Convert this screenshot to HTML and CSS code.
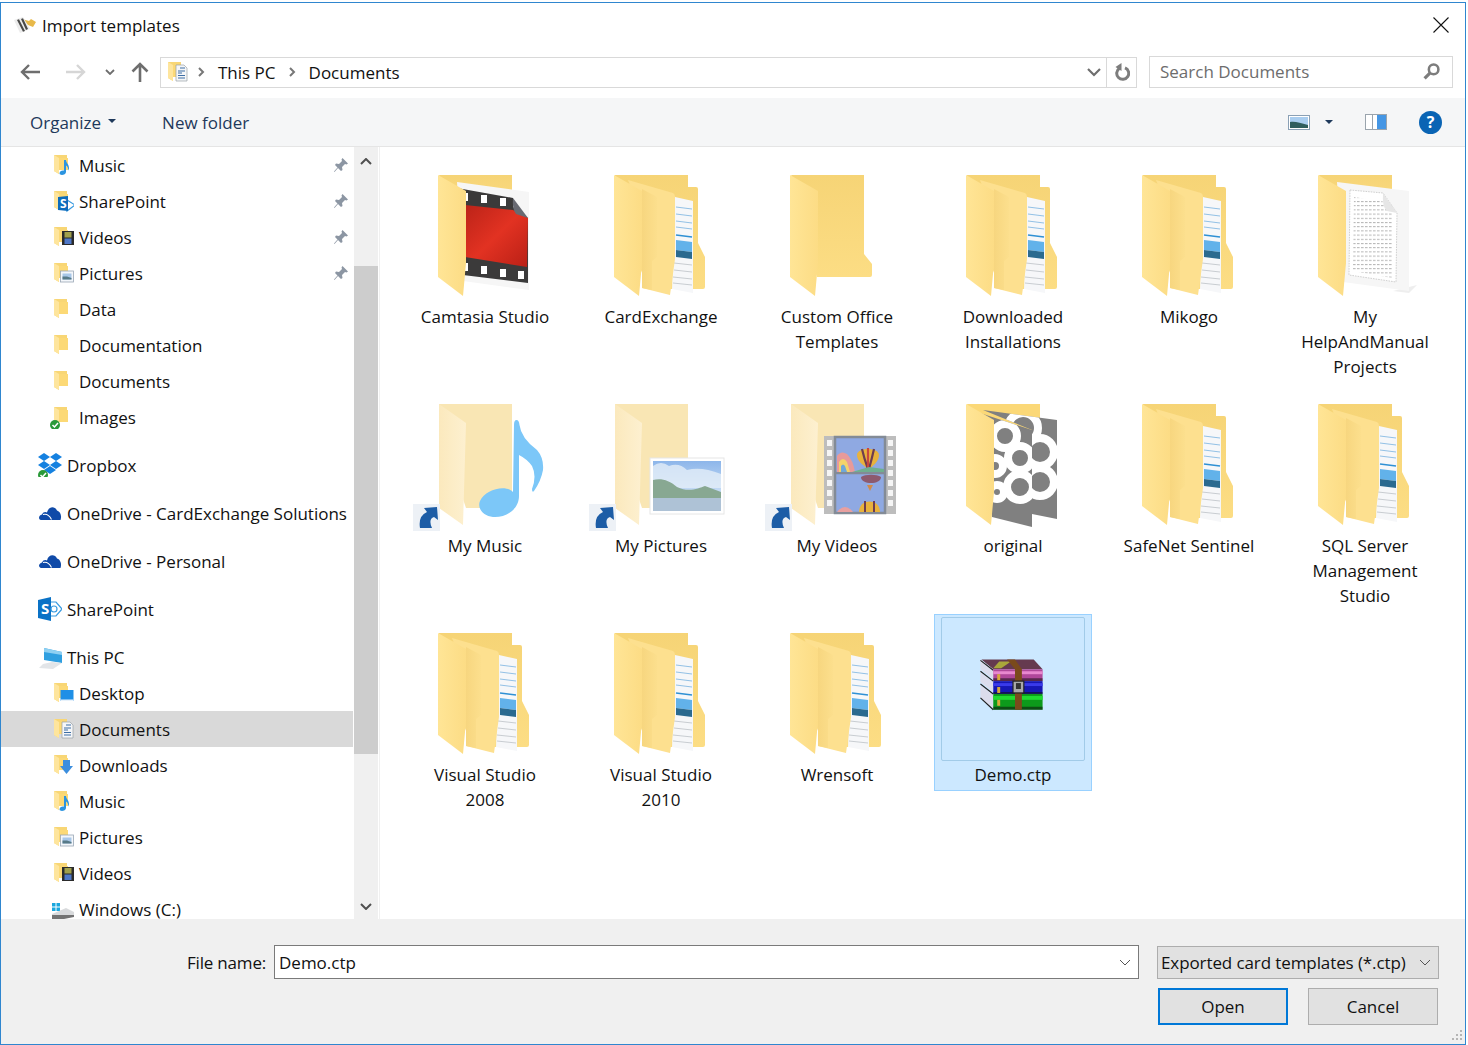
FILE: index.html
```html
<!DOCTYPE html>
<html lang="en">
<head>
<meta charset="utf-8">
<title>Import templates</title>
<link rel="stylesheet" href="styles.css">
</head>
<body>
<svg class="defs" xmlns="http://www.w3.org/2000/svg">
  <defs>
    <linearGradient id="gBack" x1="0" y1="0" x2="0" y2="1"><stop offset="0" stop-color="#f6d476"/><stop offset="1" stop-color="#fcdd84"/></linearGradient>
    <linearGradient id="gFlap" x1="0" y1="0" x2="1" y2="0"><stop offset="0" stop-color="#ffe596"/><stop offset="1" stop-color="#fcdc85"/></linearGradient>
    <linearGradient id="gStrip" x1="0" y1="0" x2="1" y2="0"><stop offset="0" stop-color="#f7d67f"/><stop offset="1" stop-color="#fcdf8d"/></linearGradient>
    <linearGradient id="gRed" x1="0" y1="0" x2="1" y2="1"><stop offset="0" stop-color="#bb2318"/><stop offset=".5" stop-color="#e23222"/><stop offset="1" stop-color="#b92016"/></linearGradient>
    <linearGradient id="gSky" x1="0" y1="0" x2="0" y2="1"><stop offset="0" stop-color="#8db6ea"/><stop offset="1" stop-color="#e9f3fb"/></linearGradient>
    <linearGradient id="gFade" x1="0" y1="0" x2="1" y2="0"><stop offset="0" stop-color="#fbe9bd"/><stop offset="1" stop-color="#fdf0d0"/></linearGradient>
    <pattern id="pLines" width="4" height="4.2" patternUnits="userSpaceOnUse"><rect width="2.6" height="1" fill="#b4b4b4"/></pattern>
    <clipPath id="cFront"><path d="M39 25 91 42V139L51 129Z"/></clipPath>
    <clipPath id="cRear"><path d="M42 22 116 32V131L91 126V42Z"/></clipPath>

    <symbol id="flap" viewBox="0 0 144 144"><path d="M25 16 53 32V104L50 137 25 118Z" fill="url(#gFlap)"/></symbol>

    <symbol id="lg-plain" viewBox="0 0 144 144">
      <path d="M26 16H99V95L107 105V116Q107 118 105 118H52V60Z" fill="url(#gBack)"/>
      <use href="#flap"/>
    </symbol>

    <symbol id="lg-docs" viewBox="0 0 144 144">
      <path d="M26 16H99V28H107Q109 28 109 30V84L116 98V128Q116 130 114 130H60L30 60Z" fill="url(#gBack)"/>
      <path d="M86 38 104 42V134L83 130Z" fill="#f6f7f9"/>
      <path d="M87 48 103 50M87 55 103 57M87 62 103 64M87 68 103 70" stroke="#79b3e0" stroke-width=".8" fill="none"/>
      <path d="M87 76 103 78" stroke="#2f90d4" stroke-width="1.6" fill="none"/>
      <path d="M87 81 103 83V93L87 91Z" fill="#62b2ea"/>
      <path d="M87 91 103 93V100L87 98Z" fill="#2b6a8f"/>
      <path d="M85 104 103 106M85 111 103 113M84 118 103 120M84 124 103 126" stroke="#bcc2c7" stroke-width=".8" fill="none"/>
      <path d="M39 21 84 34Q86 35 86 38V100L81 136 53 129V60Z" fill="#fde08f"/>
      <path d="M53 30 68 38V98L63 102V131L53 129Z" fill="url(#gStrip)"/>
      <use href="#flap"/>
    </symbol>

    <symbol id="lg-camtasia" viewBox="0 0 144 144">
      <path d="M26 16H99V60H40Z" fill="url(#gBack)"/>
      <path d="M44 23 116 33V131L50 122Z" fill="#f6f6f6"/>
      <path d="M44 29 100 39V48L115 59V124L50 116Z" fill="#3b3a3a"/>
      <path d="M52 46 100 51 115 59 114 108 52 98Z" fill="url(#gRed)"/>
      <path d="M100 39 115 59 103 55Q99 50 100 39Z" fill="#686a72"/>
      <g fill="#fff"><rect x="49" y="34" width="6" height="8"/><rect x="68" y="36" width="6" height="8"/><rect x="87" y="39" width="6" height="8"/><rect x="49" y="104" width="6" height="8"/><rect x="68" y="107" width="6" height="8"/><rect x="87" y="110" width="6" height="8"/><rect x="105" y="112" width="6" height="8"/></g>
      <use href="#flap"/>
    </symbol>

    <symbol id="lg-help" viewBox="0 0 144 144">
      <path d="M26 16H99V60H40Z" fill="url(#gBack)"/>
      <path d="M100 132 124 126 116 134Z" fill="#eee"/>
      <path d="M44 23 116 32V132L50 123Z" fill="#f6f6f6"/>
      <path d="M57 31 90 34 104 54 103 123 56 116Z" fill="#fff" stroke="#bdbdbd" stroke-width=".7" stroke-dasharray="1.6 1"/>
      <path d="M61 38 99 44V119L60 112Z" fill="url(#pLines)"/>
      <path d="M90 34 104 54 94 52Q89 48 90 34Z" fill="#e6e6e6"/>
      <use href="#flap"/>
    </symbol>

    <symbol id="lg-original" viewBox="0 0 144 144">
      <path d="M26 16H99V60H40Z" fill="#fbd877"/>
      <path d="M42 22 116 32V131L91 126V42Z" fill="#808080"/>
      <g clip-path="url(#cRear)" fill="none" stroke="#fff" stroke-width="8"><circle cx="82" cy="40" r="15"/><circle cx="99" cy="64" r="14"/><circle cx="99" cy="94" r="14"/></g>
      <path d="M39 25 91 42V139L51 129Z" fill="#808080"/>
      <g clip-path="url(#cFront)" fill="none" stroke="#fff" stroke-width="8"><circle cx="64" cy="48" r="12"/><circle cx="79" cy="70" r="12"/><circle cx="79" cy="99" r="13"/><circle cx="54" cy="78" r="8"/><circle cx="56" cy="104" r="7"/></g>
      <use href="#flap"/>
    </symbol>

    <symbol id="lg-faded" viewBox="0 0 144 144">
      <path d="M26 16H99V120H53L26 40Z" fill="#f9e6b4"/>
      <path d="M26 16 53 35 50 137 26 120Z" fill="url(#gFade)"/>
    </symbol>

    <symbol id="shortcut" viewBox="0 0 144 144">
      <rect x="0" y="116" width="27" height="27" fill="#edf1f6"/>
      <path d="M7 140Q5 128 14 124L11 120 24 119 25 132 21 129Q15 131 19 140Z" fill="#1d5da6"/>
    </symbol>

    <symbol id="lg-music" viewBox="0 0 144 144">
      <use href="#lg-faded"/>
      <path d="M101 37Q101 32 103.5 32 106 32 106.5 37 108 50 124 62 131 70 130 82 128 93 121 103 119 105 119 101 124 88 119 78 114 71 106 67V108C106 122 92 130 80 129 70 128 64 120 67 113 72 102 92 96 100 104Z" fill="#7cc7f8"/>
      <use href="#shortcut"/>
    </symbol>

    <symbol id="lg-pics" viewBox="0 0 144 144">
      <use href="#lg-faded"/>
      <rect x="61" y="70" width="74" height="56" fill="#fff" stroke="#e6e6e6"/>
      <rect x="64" y="73" width="68" height="50" fill="url(#gSky)"/>
      <path d="M64 78Q72 72 80 78 90 74 98 82 112 78 132 86V100H64Z" fill="#e4eef8" opacity=".8"/>
      <path d="M64 92C72 90 80 92 88 99 100 105 110 100 116 98L132 104V110H64Z" fill="#88a892"/>
      <rect x="64" y="110" width="68" height="13" fill="#aec2d6"/>
      <use href="#shortcut"/>
    </symbol>

    <symbol id="lg-videos" viewBox="0 0 144 144">
      <use href="#lg-faded"/>
      <rect x="59" y="48" width="72" height="78" fill="#bdbdbd"/>
      <rect x="70" y="49" width="50" height="76" fill="#8fa9e2" stroke="#838b96" stroke-width="2.5"/>
      <path d="M70 85H120" stroke="#838b96" stroke-width="2.5"/>
      <g fill="#fff" opacity=".85"><rect x="62" y="52" width="5" height="6"/><rect x="62" y="62" width="5" height="6"/><rect x="62" y="72" width="5" height="6"/><rect x="62" y="82" width="5" height="6"/><rect x="62" y="92" width="5" height="6"/><rect x="62" y="102" width="5" height="6"/><rect x="62" y="112" width="5" height="6"/><rect x="123" y="52" width="5" height="6"/><rect x="123" y="62" width="5" height="6"/><rect x="123" y="72" width="5" height="6"/><rect x="123" y="82" width="5" height="6"/><rect x="123" y="92" width="5" height="6"/><rect x="123" y="102" width="5" height="6"/><rect x="123" y="112" width="5" height="6"/></g>
      <path d="M72 84V68Q76 62 82 66 88 72 90 84Z" fill="#e89a9a"/>
      <path d="M74 84V74Q78 68 82 74L85 84Z" fill="#f3d36a"/>
      <path d="M76 84V78Q78 75 80 78L82 84Z" fill="#6fa8d8"/>
      <path d="M92 67C92 59 114 59 114 67 114 74 107 78 104 82 100 78 92 74 92 67Z" fill="#e8b23c"/>
      <path d="M97 61Q99 70 103 81M109 61Q107 70 104 81" stroke="#6e3d50" stroke-width="2.2" fill="none"/>
      <path d="M103 60V81" stroke="#c9483f" stroke-width="2.2"/>
      <path d="M87 84H119V81L104 79Z" fill="#6faf8f"/>
      <path d="M96 89C96 97 116 97 116 89 112 86 100 86 96 89Z" fill="#8d5a6e"/>
      <path d="M102 97 108 97 105 103Z" fill="#d08a4a"/>
      <path d="M94 124C94 110 115 110 115 124Z" fill="#e8b23c"/>
      <path d="M100 113V124M109 113V124" stroke="#6e3d50" stroke-width="2"/>
      <path d="M72 124Q80 114 88 124Z" fill="#e8a0a0"/>
      <use href="#shortcut"/>
    </symbol>

    <symbol id="lg-rar" viewBox="0 0 144 144">
      <path d="M40 42H93L102 52H52Z" fill="#653a4f"/>
      <path d="M58 44 70 44 60 51 52 51Z" fill="#a9a73a"/>
      <path d="M39 42 52 52V62L39 52Z" fill="#dcdcec"/>
      <path d="M39 55 52 65V75L39 65Z" fill="#dcdcec"/>
      <path d="M39 68 52 78V92L39 81Z" fill="#dcdcec"/>
      <path d="M39 43 52 53M39 54 52 64M39 67 52 77M39 81 52 93" stroke="#222" stroke-width="1.2"/>
      <rect x="52" y="52" width="50" height="12" fill="#b0479a"/>
      <rect x="52" y="54" width="50" height="3" fill="#e888cf"/>
      <rect x="52" y="64" width="50" height="13" fill="#1717b5"/>
      <rect x="52" y="66" width="50" height="3" fill="#3a3aea"/>
      <rect x="52" y="77" width="50" height="16" fill="#0d9a1b"/>
      <rect x="52" y="79" width="50" height="4" fill="#1fdc30"/>
      <path d="M52 90H102V93H52ZM52 61H102V64H52ZM52 75H102V77H52Z" fill="#111" opacity=".55"/>
      <rect x="56" y="57" width="3" height="6" fill="#d8a93a"/><rect x="56" y="70" width="3" height="6" fill="#d8a93a"/><rect x="56" y="83" width="3" height="6" fill="#d8a93a"/>
      <path d="M66 42H74L81 52V93H74V52Z" fill="#7a4a1c"/>
      <rect x="72" y="64" width="11" height="12" fill="#a9a9a9" stroke="#222" stroke-width="1.2"/>
      <rect x="75" y="66" width="5" height="6" fill="#333"/>
    </symbol>

    <!-- small nav icons -->
    <symbol id="s-folder" viewBox="0 0 24 24">
      <path d="M4 2H17V17H9V21L4 18Z" fill="#f8d675"/>
      <path d="M9 5H18V17H9Z" fill="#fcd976"/>
      <path d="M4 2 9 5V21L4 18Z" fill="#fee59d"/>
    </symbol>
    <symbol id="s-music" viewBox="0 0 24 24"><use href="#s-folder"/><path d="M14 7H16C16 10 19 11 19 15 19 16 18.500 17 18 17.500 18.500 14 17 13 16 12.500V19C16 22 10 23 9.500 20.500 9.500 18 12 17 14 17.500Z" fill="#2b94e0"/></symbol>
    <symbol id="s-videos" viewBox="0 0 24 24"><use href="#s-folder"/><rect x="12" y="6" width="12" height="14" fill="#2b2b2b"/><rect x="14.500" y="7" width="7" height="5.500" fill="#a1a04b"/><rect x="14.500" y="13.500" width="7" height="5.500" fill="#4f78c8"/></symbol>
    <symbol id="s-pics" viewBox="0 0 24 24"><use href="#s-folder"/><rect x="10.500" y="10" width="13" height="11" fill="#f4f7fb" stroke="#9aa6b5" stroke-width=".8"/><rect x="12.500" y="12.500" width="9" height="6" fill="#a8c7e8"/><path d="M12.500 15.500 17 15.500 21.500 17V18.500H12.500Z" fill="#577a88"/></symbol>
    <symbol id="s-docs" viewBox="0 0 24 24"><use href="#s-folder"/><path d="M12 5H20L23 8V21H12Z" fill="#f5f6f8" stroke="#9aa0a8" stroke-width=".7"/><path d="M16 8H21M14 11H21M14 13H18M14 15.500H21M14 18H21" stroke="#3d6ea5" stroke-width="1"/></symbol>
    <symbol id="s-desktop" viewBox="0 0 24 24"><use href="#s-folder"/><rect x="10.500" y="9" width="13" height="11" fill="#1f8fe6"/><rect x="10.500" y="18.500" width="13" height="1.500" fill="#e8f2fb"/></symbol>
    <symbol id="s-down" viewBox="0 0 24 24"><use href="#s-folder"/><path d="M13 7H20V13H23L16.500 21 10 13H13Z" fill="#3b8ede"/></symbol>
    <symbol id="s-sp" viewBox="0 0 24 24"><use href="#s-folder"/><path d="M17 11 25 16 17 22Z" fill="none" stroke="#3a9be0" stroke-width="1.200"/><path d="M8 8 18 7V22L8 21Z" fill="#0d6cbc"/><text x="10" y="19" class="ico-s">S</text></symbol>
    <symbol id="s-check" viewBox="0 0 24 24"><circle cx="5" cy="20" r="5" fill="#2b9a3a"/><path d="M2.500 20 4.500 22 8 18" stroke="#fff" stroke-width="1.500" fill="none"/></symbol>
    <symbol id="s-images" viewBox="0 0 24 24"><use href="#s-folder"/><use href="#s-check"/></symbol>
    <symbol id="s-dropbox" viewBox="0 0 24 24">
      <path d="M6 0 12 4 6 8 0 4ZM18 0 24 4 18 8 12 4ZM6 8 12 12 6 16 0 12ZM18 8 24 12 18 16 12 12ZM6 17 12 13 18 17 12 21Z" fill="#1581e0"/>
      <use href="#s-check" y="2"/>
    </symbol>
    <symbol id="s-cloud" viewBox="0 0 24 24"><path d="M3 19C0 18 .5 14.500 4 13.500 5 10.500 8 10.500 9 11.500 10.500 5 17 5 19 9.500 22.500 10.500 24 15 22.500 19Z" fill="#0f4aa8"/><path d="M5 13.500C9 12.500 12 15.500 13.500 18.500" stroke="#fff" stroke-width="1.100" fill="none"/></symbol>
    <symbol id="s-share" viewBox="0 0 24 24"><path d="M0 3 13 0V24L0 21Z" fill="#0a72c6"/><path d="M13 5 18 5 24 12 18 19H13" fill="#fff" stroke="#3a9be0" stroke-width="1.200"/><circle cx="16" cy="12" r="3" fill="none" stroke="#3a9be0" stroke-width="1.200"/><text x="3" y="17" class="ico-sl">S</text></symbol>
    <symbol id="s-pc" viewBox="0 0 24 24"><path d="M6 3 24 7V18L6 15Z" fill="#2f9fe0"/><path d="M6 3 24 7V10L6 7Z" fill="#8fd0f2"/><path d="M14 17 24 18 15 24 1 23 5 19Z" fill="#e2e5e8"/></symbol>
    <symbol id="s-drive" viewBox="0 0 24 24"><g fill="#19a7de"><rect x="2" y="6" width="3.500" height="3.500"/><rect x="6.500" y="6" width="3.500" height="3.500"/><rect x="2" y="10.500" width="3.500" height="3.500"/><rect x="6.500" y="10.500" width="3.500" height="3.500"/></g><path d="M2 17 16 11 24 15V19H2Z" fill="#d8dadc"/><path d="M2 18H24V20L14 22H2Z" fill="#737373"/></symbol>
    <symbol id="pin" viewBox="0 0 16 16"><path d="M9.500 1 15 6.500 13.500 7.500 12 7 9 10 9.500 13 8 14 5 11 1.500 15 1 14.500 4.500 10.500 2 8 3 6.500 6 7 9 4 8.500 2.500Z" fill="#8c96a3"/></symbol>
  </defs>
</svg>

<div class="win">
  <header class="title">
    <svg class="title-ico" viewBox="0 0 22 16"><path d="M8 2 15 4 17 2 22 5 19 10 14 8Z" fill="#e8b94a"/><path d="M0 3 9 0 16 12 6 16Z" fill="#ececec"/><path d="M3 3 5 2.300 11 14 9 14.800ZM7 2 9 1.300 14 12 12 13Z" fill="#4a4a48"/></svg>
    <span class="title-text">Import templates</span>
    <svg class="close" viewBox="0 0 16 16"><path d="M.5.5 15.500 15.500M15.500.5.500 15.500" stroke="#111" stroke-width="1.100"/></svg>
  </header>

  <div class="nav">
    <div class="nav-btns">
      <svg class="n-arrow" viewBox="0 0 20 16"><path d="M9 1 2 8 9 15M2 8H20" stroke="#6e6e6e" stroke-width="2.400" fill="none"/></svg>
      <svg class="n-arrow n-fwd" viewBox="0 0 20 16"><path d="M11 1 18 8 11 15M18 8H0" stroke="#d6d6d6" stroke-width="2.400" fill="none"/></svg>
      <svg class="n-chev" viewBox="0 0 10 6"><path d="M1 1 5 5 9 1" stroke="#6e6e6e" stroke-width="1.800" fill="none"/></svg>
      <svg class="n-up" viewBox="0 0 18 20"><path d="M1.500 9.500 9 2 16.500 9.500M9 2V20" stroke="#6e6e6e" stroke-width="2.600" fill="none"/></svg>
    </div>
    <div class="addr">
      <svg class="addr-ico" viewBox="0 0 24 24"><use href="#s-docs"/></svg>
      <svg class="crumb" viewBox="0 0 7 10"><path d="M1 1 5 5 1 9" stroke="#777" stroke-width="2" fill="none"/></svg>
      <span class="crumb-text">This PC</span>
      <svg class="crumb" viewBox="0 0 7 10"><path d="M1 1 5 5 1 9" stroke="#777" stroke-width="2" fill="none"/></svg>
      <span class="crumb-text">Documents</span>
      <svg class="addr-drop" viewBox="0 0 14 9"><path d="M1 1 7 7 13 1" stroke="#6e6e6e" stroke-width="2.200" fill="none"/></svg>
      <span class="refresh"><svg class="refresh-ico" viewBox="0 0 16 18"><path d="M5.500 5.300A6 6 0 1 0 11 4.800" stroke="#7d7d7d" stroke-width="3" fill="none"/><path d="M7.500 0 7.500 8 1.500 4Z" fill="#7d7d7d"/></svg></span>
    </div>
    <div class="search">
      <span class="search-text">Search Documents</span>
      <svg class="search-ico" viewBox="0 0 16 16"><circle cx="10" cy="6" r="4.500" fill="none" stroke="#7d7d7d" stroke-width="2.400"/><path d="M6.500 9.500 1.500 14.500" stroke="#7d7d7d" stroke-width="3"/></svg>
    </div>
  </div>

  <div class="toolbar">
    <span class="tb-item">Organize<svg class="caret" viewBox="0 0 8 4"><path d="M0 0H8L4 4Z" fill="#1e395b"/></svg></span>
    <span class="tb-item tb-new">New folder</span>
    <span class="tb-right">
      <svg class="view-ico" viewBox="0 0 22 15"><rect x=".5" y=".5" width="21" height="14" fill="#fff" stroke="#8aa0b5"/><rect x="2" y="2" width="18" height="11" fill="#a9cdef"/><path d="M2 7C7 6 12 8 20 10V13H2Z" fill="#2f5d5d"/></svg>
      <svg class="caret-view" viewBox="0 0 8 4"><path d="M0 0H8L4 4Z" fill="#1e395b"/></svg>
      <svg class="pane-ico" viewBox="0 0 22 16"><rect x=".5" y=".5" width="21" height="15" fill="#fff" stroke="#9aa4ad"/><rect x="7" y="1" width="1" height="14" fill="#9aa4ad"/><rect x="12" y="1" width="9" height="14" fill="#4596e4"/></svg>
      <span class="help">?</span>
    </span>
  </div>

  <main class="main">
    <nav class="tree">
      <div class="tree-list">
        <div class="row"><svg class="ri"><use href="#s-music"/></svg><span class="lbl">Music</span><svg class="pin"><use href="#pin"/></svg></div>
        <div class="row"><svg class="ri"><use href="#s-sp"/></svg><span class="lbl">SharePoint</span><svg class="pin"><use href="#pin"/></svg></div>
        <div class="row"><svg class="ri"><use href="#s-videos"/></svg><span class="lbl">Videos</span><svg class="pin"><use href="#pin"/></svg></div>
        <div class="row"><svg class="ri"><use href="#s-pics"/></svg><span class="lbl">Pictures</span><svg class="pin"><use href="#pin"/></svg></div>
        <div class="row"><svg class="ri"><use href="#s-folder"/></svg><span class="lbl">Data</span></div>
        <div class="row"><svg class="ri"><use href="#s-folder"/></svg><span class="lbl">Documentation</span></div>
        <div class="row"><svg class="ri"><use href="#s-folder"/></svg><span class="lbl">Documents</span></div>
        <div class="row"><svg class="ri"><use href="#s-images"/></svg><span class="lbl">Images</span></div>
        <div class="row root first"><svg class="ri"><use href="#s-dropbox"/></svg><span class="lbl">Dropbox</span></div>
        <div class="row root"><svg class="ri"><use href="#s-cloud"/></svg><span class="lbl">OneDrive - CardExchange Solutions</span></div>
        <div class="row root"><svg class="ri"><use href="#s-cloud"/></svg><span class="lbl">OneDrive - Personal</span></div>
        <div class="row root"><svg class="ri"><use href="#s-share"/></svg><span class="lbl">SharePoint</span></div>
        <div class="row root"><svg class="ri"><use href="#s-pc"/></svg><span class="lbl">This PC</span></div>
        <div class="row"><svg class="ri"><use href="#s-desktop"/></svg><span class="lbl">Desktop</span></div>
        <div class="row active"><svg class="ri"><use href="#s-docs"/></svg><span class="lbl">Documents</span></div>
        <div class="row"><svg class="ri"><use href="#s-down"/></svg><span class="lbl">Downloads</span></div>
        <div class="row"><svg class="ri"><use href="#s-music"/></svg><span class="lbl">Music</span></div>
        <div class="row"><svg class="ri"><use href="#s-pics"/></svg><span class="lbl">Pictures</span></div>
        <div class="row"><svg class="ri"><use href="#s-videos"/></svg><span class="lbl">Videos</span></div>
        <div class="row"><svg class="ri"><use href="#s-drive"/></svg><span class="lbl">Windows (C:)</span></div>
      </div>
      <div class="sbar">
        <svg class="sb-up" viewBox="0 0 12 7"><path d="M1 6 6 1 11 6" stroke="#505050" stroke-width="2" fill="none"/></svg>
        <div class="sb-thumb"></div>
        <svg class="sb-down" viewBox="0 0 12 7"><path d="M1 1 6 6 11 1" stroke="#505050" stroke-width="2" fill="none"/></svg>
      </div>
    </nav>
    <div class="split"></div>
    <section class="files">
      <div class="tile"><svg class="big"><use href="#lg-camtasia"/></svg><div class="name">Camtasia Studio</div></div>
      <div class="tile"><svg class="big"><use href="#lg-docs"/></svg><div class="name">CardExchange</div></div>
      <div class="tile"><svg class="big"><use href="#lg-plain"/></svg><div class="name">Custom Office Templates</div></div>
      <div class="tile"><svg class="big"><use href="#lg-docs"/></svg><div class="name">Downloaded Installations</div></div>
      <div class="tile"><svg class="big"><use href="#lg-docs"/></svg><div class="name">Mikogo</div></div>
      <div class="tile"><svg class="big"><use href="#lg-help"/></svg><div class="name">My HelpAndManual Projects</div></div>
      <div class="tile"><svg class="big"><use href="#lg-music"/></svg><div class="name">My Music</div></div>
      <div class="tile"><svg class="big"><use href="#lg-pics"/></svg><div class="name">My Pictures</div></div>
      <div class="tile"><svg class="big"><use href="#lg-videos"/></svg><div class="name">My Videos</div></div>
      <div class="tile"><svg class="big"><use href="#lg-original"/></svg><div class="name">original</div></div>
      <div class="tile"><svg class="big"><use href="#lg-docs"/></svg><div class="name">SafeNet Sentinel</div></div>
      <div class="tile"><svg class="big"><use href="#lg-docs"/></svg><div class="name">SQL Server Management Studio</div></div>
      <div class="tile"><svg class="big"><use href="#lg-docs"/></svg><div class="name">Visual Studio 2008</div></div>
      <div class="tile"><svg class="big"><use href="#lg-docs"/></svg><div class="name">Visual Studio 2010</div></div>
      <div class="tile"><svg class="big"><use href="#lg-docs"/></svg><div class="name">Wrensoft</div></div>
      <div class="tile selected"><svg class="big"><use href="#lg-rar"/></svg><div class="name">Demo.ctp</div></div>
    </section>
  </main>

  <footer class="foot">
    <div class="foot-row1">
      <span class="fn-label">File name:</span>
      <div class="fn-input"><span>Demo.ctp</span><svg class="dd" viewBox="0 0 12 7"><path d="M1 1 6 6 11 1" stroke="#555" stroke-width="1" fill="none"/></svg></div>
      <div class="filter"><span>Exported card templates (*.ctp)</span><svg class="dd" viewBox="0 0 12 7"><path d="M1 1 6 6 11 1" stroke="#555" stroke-width="1" fill="none"/></svg></div>
    </div>
    <div class="foot-row2">
      <button class="btn btn-primary">Open</button>
      <button class="btn">Cancel</button>
    </div>
    <svg class="grip" viewBox="0 0 12 12"><g fill="#b5b5b5"><rect x="9" y="0" width="2" height="2"/><rect x="5" y="4" width="2" height="2"/><rect x="9" y="4" width="2" height="2"/><rect x="1" y="8" width="2" height="2"/><rect x="5" y="8" width="2" height="2"/><rect x="9" y="8" width="2" height="2"/></g></svg>
  </footer>
</div>
</body>
</html>
```

FILE: styles.css
```css
* { box-sizing: border-box; }
html, body { margin: 0; padding: 0; background: #fff; }
body {
  width: 1468px;
  height: 1045px;
  overflow: hidden;
  padding-top: 2px;
  font-family: "Open Sans", "Noto Sans", sans-serif;
  font-size: 17px;
  color: #111;
}
.defs { position: absolute; width: 0; height: 0; }
.ico-s { font: bold 12px "Open Sans", sans-serif; fill: #fff; }
.ico-sl { font: bold 15px "Open Sans", sans-serif; fill: #fff; }

.win {
  position: relative;
  width: 1466px;
  height: 1043px;
  border: 1px solid #2f86cf;
  background: #fff;
  display: flex;
  flex-direction: column;
  overflow: hidden;
}

/* title */
.title { height: 47px; flex: none; display: flex; align-items: center; padding-left: 13px; padding-right: 16px; }
.title-ico { width: 22px; height: 16px; margin-right: 6px; margin-top: -3px; }
.title-text { flex: 1; margin-top: -2px; }
.close { width: 16px; height: 16px; margin-top: -3px; }

/* nav */
.nav { height: 48px; flex: none; display: flex; align-items: center; padding-right: 12px; }
.nav-btns { width: 159px; flex: none; display: flex; align-items: center; padding-left: 19px; margin-top: -4px; }
.n-arrow { width: 20px; height: 16px; }
.n-fwd { margin-left: 26px; }
.n-chev { width: 10px; height: 6px; margin-left: 19px; }
.n-up { width: 18px; height: 20px; margin-left: 16px; }
.addr {
  width: 977px; height: 31px; flex: none; margin-top: -4px;
  border: 1px solid #d9d9d9;
  display: flex; align-items: center;
}
.addr-ico { width: 24px; height: 24px; margin-left: 3px; margin-right: 10px; }
.crumb { width: 7px; height: 10px; }
.crumb-text { margin: 0 13px; }
.crumb-text:last-of-type { margin-right: 0; }
.addr-drop { width: 14px; height: 9px; margin-left: auto; margin-right: 5px; }
.refresh { width: 30px; height: 29px; border-left: 1px solid #d9d9d9; display: flex; align-items: center; justify-content: center; }
.refresh-ico { width: 16px; height: 18px; }
.search {
  width: 304px; height: 32px; flex: none; margin-left: 12px; margin-top: -5px;
  border: 1px solid #d9d9d9;
  display: flex; align-items: center; justify-content: space-between;
  padding: 0 12px 0 10px;
}
.search-text { color: #6d6d6d; }
.search-ico { width: 17px; height: 17px; }

/* toolbar */
.toolbar {
  height: 49px; flex: none; background: #f5f6f7;
  border-bottom: 1px solid #e5e5e5;
  display: flex; align-items: center;
  padding-left: 29px; color: #1e395b;
}
.tb-item { display: flex; align-items: center; }
.caret { width: 8px; height: 4px; margin-left: 7px; margin-top: -2px; }
.tb-new { margin-left: 46px; }
.tb-right { margin-left: auto; display: flex; align-items: center; padding-right: 23px; }
.view-ico { width: 22px; height: 15px; }
.caret-view { width: 8px; height: 4px; margin-left: 15px; }
.pane-ico { width: 22px; height: 16px; margin-left: 32px; }
.help {
  width: 23px; height: 23px; margin-left: 32px; border-radius: 50%;
  background: #0a64b4; color: #fff; font-weight: 700; font-size: 16px;
  display: flex; align-items: center; justify-content: center;
}

/* main */
.main { height: 772px; flex: none; display: flex; }
.tree { width: 377px; flex: none; display: flex; }
.tree-list { width: 352px; flex: none; overflow: hidden; }
.row { height: 36px; display: flex; align-items: center; padding-left: 49px; padding-right: 4px; }
.row.active { background: #d9d9d9; }
.ri { width: 24px; height: 24px; flex: none; margin-right: 5px; }
.lbl { white-space: nowrap; }
.pin { width: 16px; height: 16px; margin-left: auto; }
.row.root { height: 48px; padding-left: 37px; }
.row.first { margin-top: 6px; }
.row.root + .row:not(.root) { margin-top: -6px; }

.sbar { width: 24px; flex: none; background: #f0f0f0; position: relative; padding-top: 119px; margin-left: 1px; }
.sb-thumb { height: 488px; background: #cdcdcd; }
.sb-up, .sb-down { position: absolute; left: 6px; width: 12px; height: 7px; }
.sb-up { top: 11px; }
.sb-down { bottom: 9px; }
.split { width: 4px; flex: none; background: linear-gradient(90deg, #fff 0 1px, #f0f0f0 1px 2px, #fff 2px); }

.files {
  flex: 1;
  padding: 9px 0 0 24px;
  display: grid;
  grid-template-columns: repeat(6, 158px);
  grid-auto-rows: 229px;
  column-gap: 18px;
  align-items: start;
}
.tile { width: 158px; padding: 2px 6px 3px; border: 1px solid transparent; }
.big { display: block; width: 144px; height: 144px; }
.name { line-height: 25px; padding-top: 1px; text-align: center; }
.tile.selected { background: #cce8ff; border-color: #99d1ff; }
.tile.selected .big { border: 1px solid #a2cbe8; border-radius: 2px; }

/* footer */
.foot { flex: 1; background: #f0f0f0; position: relative; padding-top: 26px; }
.foot-row1 { display: flex; align-items: center; height: 34px; }
.fn-label { width: 265px; text-align: right; margin-right: 8px; flex: none; letter-spacing: -.2px; }
.fn-input {
  width: 865px; height: 34px; flex: none; background: #fff; border: 1px solid #7a7a7a;
  display: flex; align-items: center; justify-content: space-between; padding: 0 7px 0 4px;
}
.filter {
  width: 282px; height: 33px; flex: none; margin-left: 18px; background: #e1e1e1; border: 1px solid #adadad;
  display: flex; align-items: center; justify-content: space-between; padding: 0 7px 0 3px; letter-spacing: -.1px;
}
.dd { width: 12px; height: 7px; flex: none; }
.foot-row2 { display: flex; gap: 20px; margin-top: 9px; padding-left: 1157px; }
.btn {
  width: 130px; height: 37px; background: #e1e1e1; border: 1px solid #adadad;
  font: inherit; color: #111; padding: 0;
}
.btn-primary { border: 2px solid #0078d7; }
.grip { position: absolute; right: 2px; bottom: 2px; width: 12px; height: 12px; }
```
